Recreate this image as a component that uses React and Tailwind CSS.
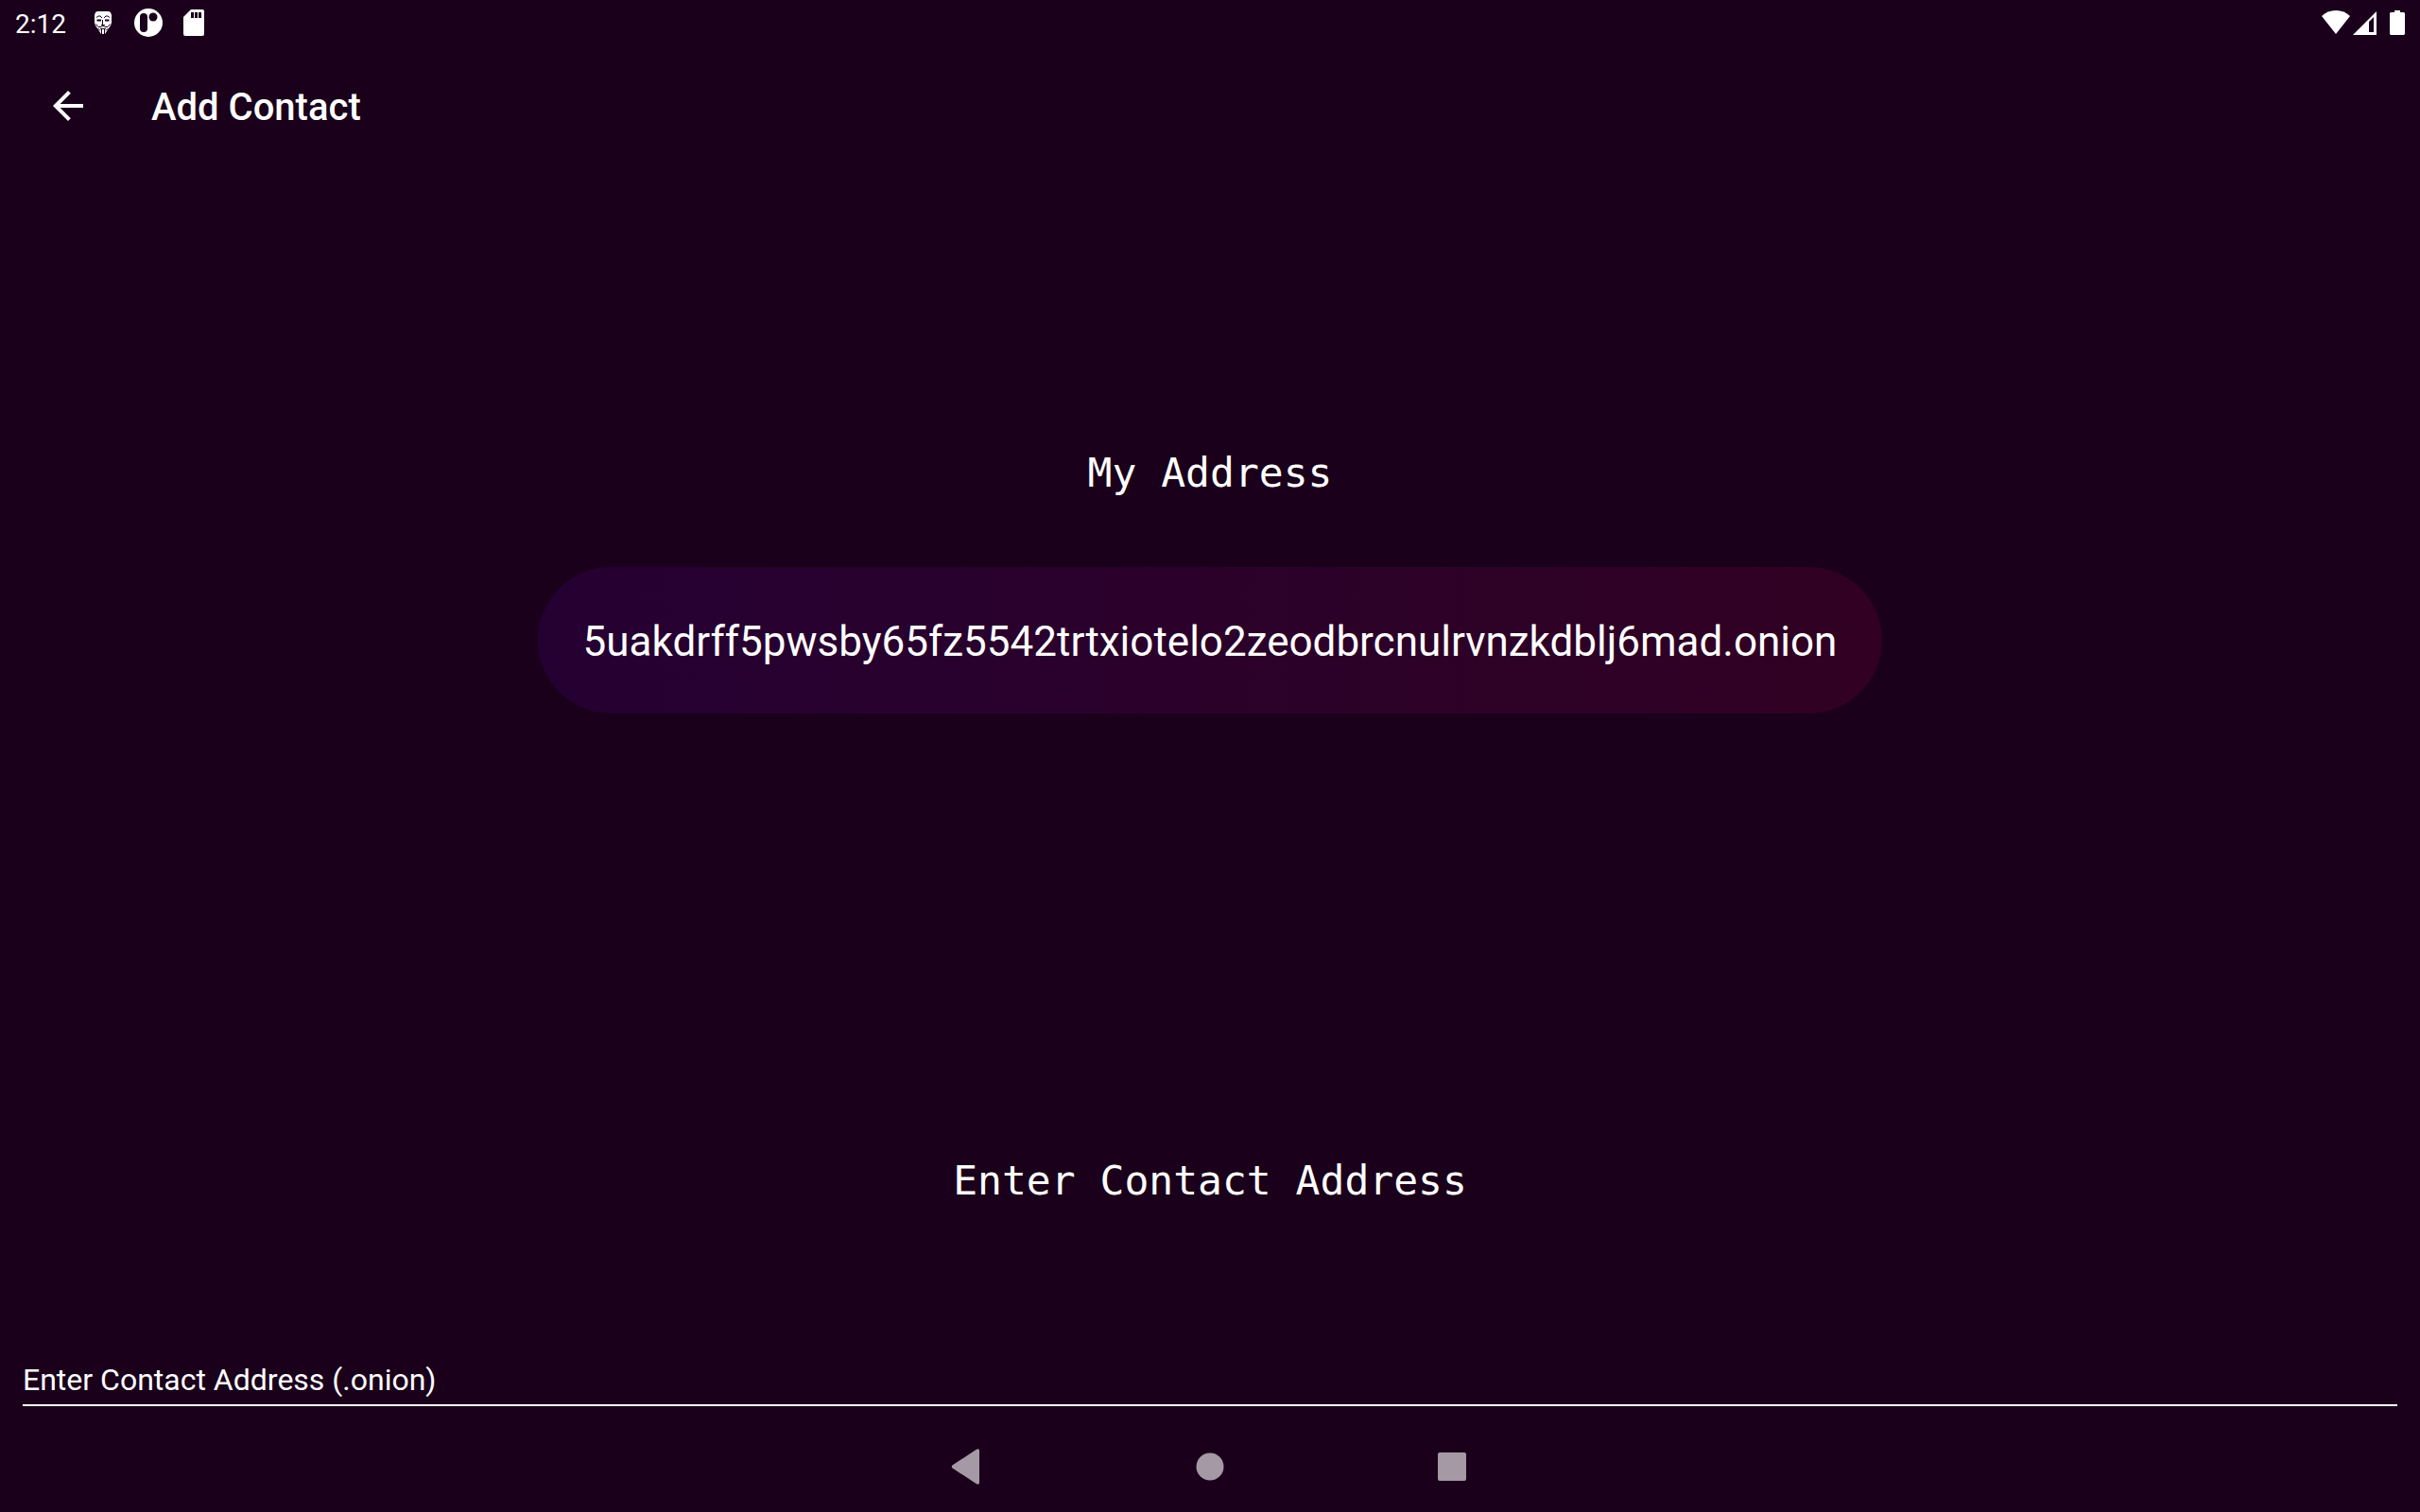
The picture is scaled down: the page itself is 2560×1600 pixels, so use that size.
import React from "react";

function MaskIcon() {
  return (
    <svg width="18" height="25" viewBox="0 0 18 25" aria-hidden="true">
      <path fill="#fff" d="M1 1 3 0H15L17 1 18 4V12L17 15 15 18 13 21 11 24H7L5 21 3 18 1 15 0 12V4Z" />
      <g fill="none" stroke="#1a001b" strokeWidth="1">
        <path d="M2 6.500 4 5H6L8 7M10 7 12 5H14L16 6.500" />
        <path d="M2.500 9.500H7M11 9.500H15.500" strokeWidth="2" />
        <path d="M8.500 9V14M7 14.500H11M1.500 13.500 4 16.500H7L9 15.500 11 16.500H14L16.500 13.500" />
        <path d="M6 18.500H12M7.500 19V24M10.500 19V24M3.500 18 6 20.500M14.500 18 12 20.500" />
      </g>
    </svg>
  );
}

function PatreonIcon() {
  return (
    <svg width="30" height="30" viewBox="0 0 30 30" aria-hidden="true">
      <circle cx="15" cy="15" r="15" fill="#fff" />
      <rect x="6" y="5" width="8" height="20" rx="4" fill="#1a001b" />
      <circle cx="20" cy="9" r="4.500" fill="#1a001b" />
    </svg>
  );
}

function SdCardIcon() {
  return (
    <svg width="22" height="28" viewBox="0 0 22 28" aria-hidden="true">
      <path fill="#fff" d="M8 0H20Q22 0 22 2V26Q22 28 20 28H2Q0 28 0 26V8Z" />
      <path fill="#1a001b" d="M8 3H11V9H8ZM12 3H15V9H12ZM16 3H19V9H16Z" />
    </svg>
  );
}

function StatusBar() {
  return (
    <header className="flex h-12 items-center justify-between px-4">
      <div className="flex items-center">
        <time className="w-[84px] pt-1 text-[28px] leading-8">2:12</time>
        <MaskIcon />
        <span className="ml-6"><PatreonIcon /></span>
        <span className="ml-[22px]"><SdCardIcon /></span>
      </div>
      <div className="flex items-center">
        <svg width="30" height="26" viewBox="0 0 30 26" aria-label="Wi-Fi">
          <path fill="#fff" d="M0 6Q6 0 15 0T30 6L15 25Z" />
        </svg>
        <svg className="ml-[3px]" width="25" height="26" viewBox="0 0 25 26" aria-label="Signal">
          <path fill="#fff" fillRule="evenodd" d="M25 1V26H0ZM22 7V23H17V12Z" />
        </svg>
        <svg className="ml-[14px]" width="16" height="26" viewBox="0 0 16 26" aria-label="Battery">
          <path fill="#fff" d="M5 0H11V2H15L16 3V25L15 26H1L0 25V3L1 2H5Z" />
        </svg>
      </div>
    </header>
  );
}

function NavBar() {
  return (
    <nav className="flex h-24 items-center justify-center gap-52 text-[#a499a4]">
      <button type="button" aria-label="Back" className="flex size-12 items-center justify-center">
        <svg width="48" height="48" viewBox="0 0 48 48" fill="currentColor">
          <path d="M7.500 22.500 33 5.800Q36 4.500 36 7V41Q36 43.500 33 42.200L7.500 25.500Q6 24 7.500 22.500Z" />
        </svg>
      </button>
      <button type="button" aria-label="Home" className="flex size-12 items-center justify-center">
        <svg width="30" height="30" viewBox="0 0 30 30" fill="currentColor"><circle cx="15" cy="15" r="14.500" /></svg>
      </button>
      <button type="button" aria-label="Overview" className="flex size-12 items-center justify-center">
        <svg width="30" height="30" viewBox="0 0 30 30" fill="currentColor"><rect width="30" height="30" rx="2" /></svg>
      </button>
    </nav>
  );
}

export default function App() {
  return (
    <div className="flex min-h-screen flex-col bg-[#1a001b] font-['Roboto',sans-serif] text-white">
      <StatusBar />
      <div className="flex h-32 items-center px-12">
        <button type="button" aria-label="Navigate up" className="flex size-12 items-center justify-center">
          <svg width="48" height="48" viewBox="0 0 24 24" fill="currentColor">
            <path d="M20 11H7.830l5.590-5.590L12 4l-8 8 8 8 1.410-1.410L7.830 13H20v-2z" />
          </svg>
        </button>
        <h1 className="ml-16 pt-1 text-[40px] leading-12 font-medium">Add Contact</h1>
      </div>
      <main className="flex flex-1 flex-col items-center justify-end px-6">
        <h2 className="font-['DejaVu_Sans_Mono',monospace] text-[43px] leading-14">My Address</h2>
        <p className="mt-[72px] rounded-full bg-linear-to-r from-[#250032] to-[#310022] px-12 pt-[50px] pb-[46px] text-[44px] leading-[59px]">
          5uakdrff5pwsby65fz5542trtxiotelo2zeodbrcnulrvnzkdblj6mad.onion
        </p>
        <label htmlFor="contact" className="mt-[466px] font-['DejaVu_Sans_Mono',monospace] text-[43px] leading-14">
          Enter Contact Address
        </label>
        <input
          id="contact"
          type="text"
          placeholder="Enter Contact Address (.onion)"
          className="mt-[155px] mb-4 h-14 w-full border-b-2 border-white bg-transparent pt-[2px] text-[32px] leading-10 outline-none placeholder:text-white"
        />
      </main>
      <NavBar />
    </div>
  );
}
